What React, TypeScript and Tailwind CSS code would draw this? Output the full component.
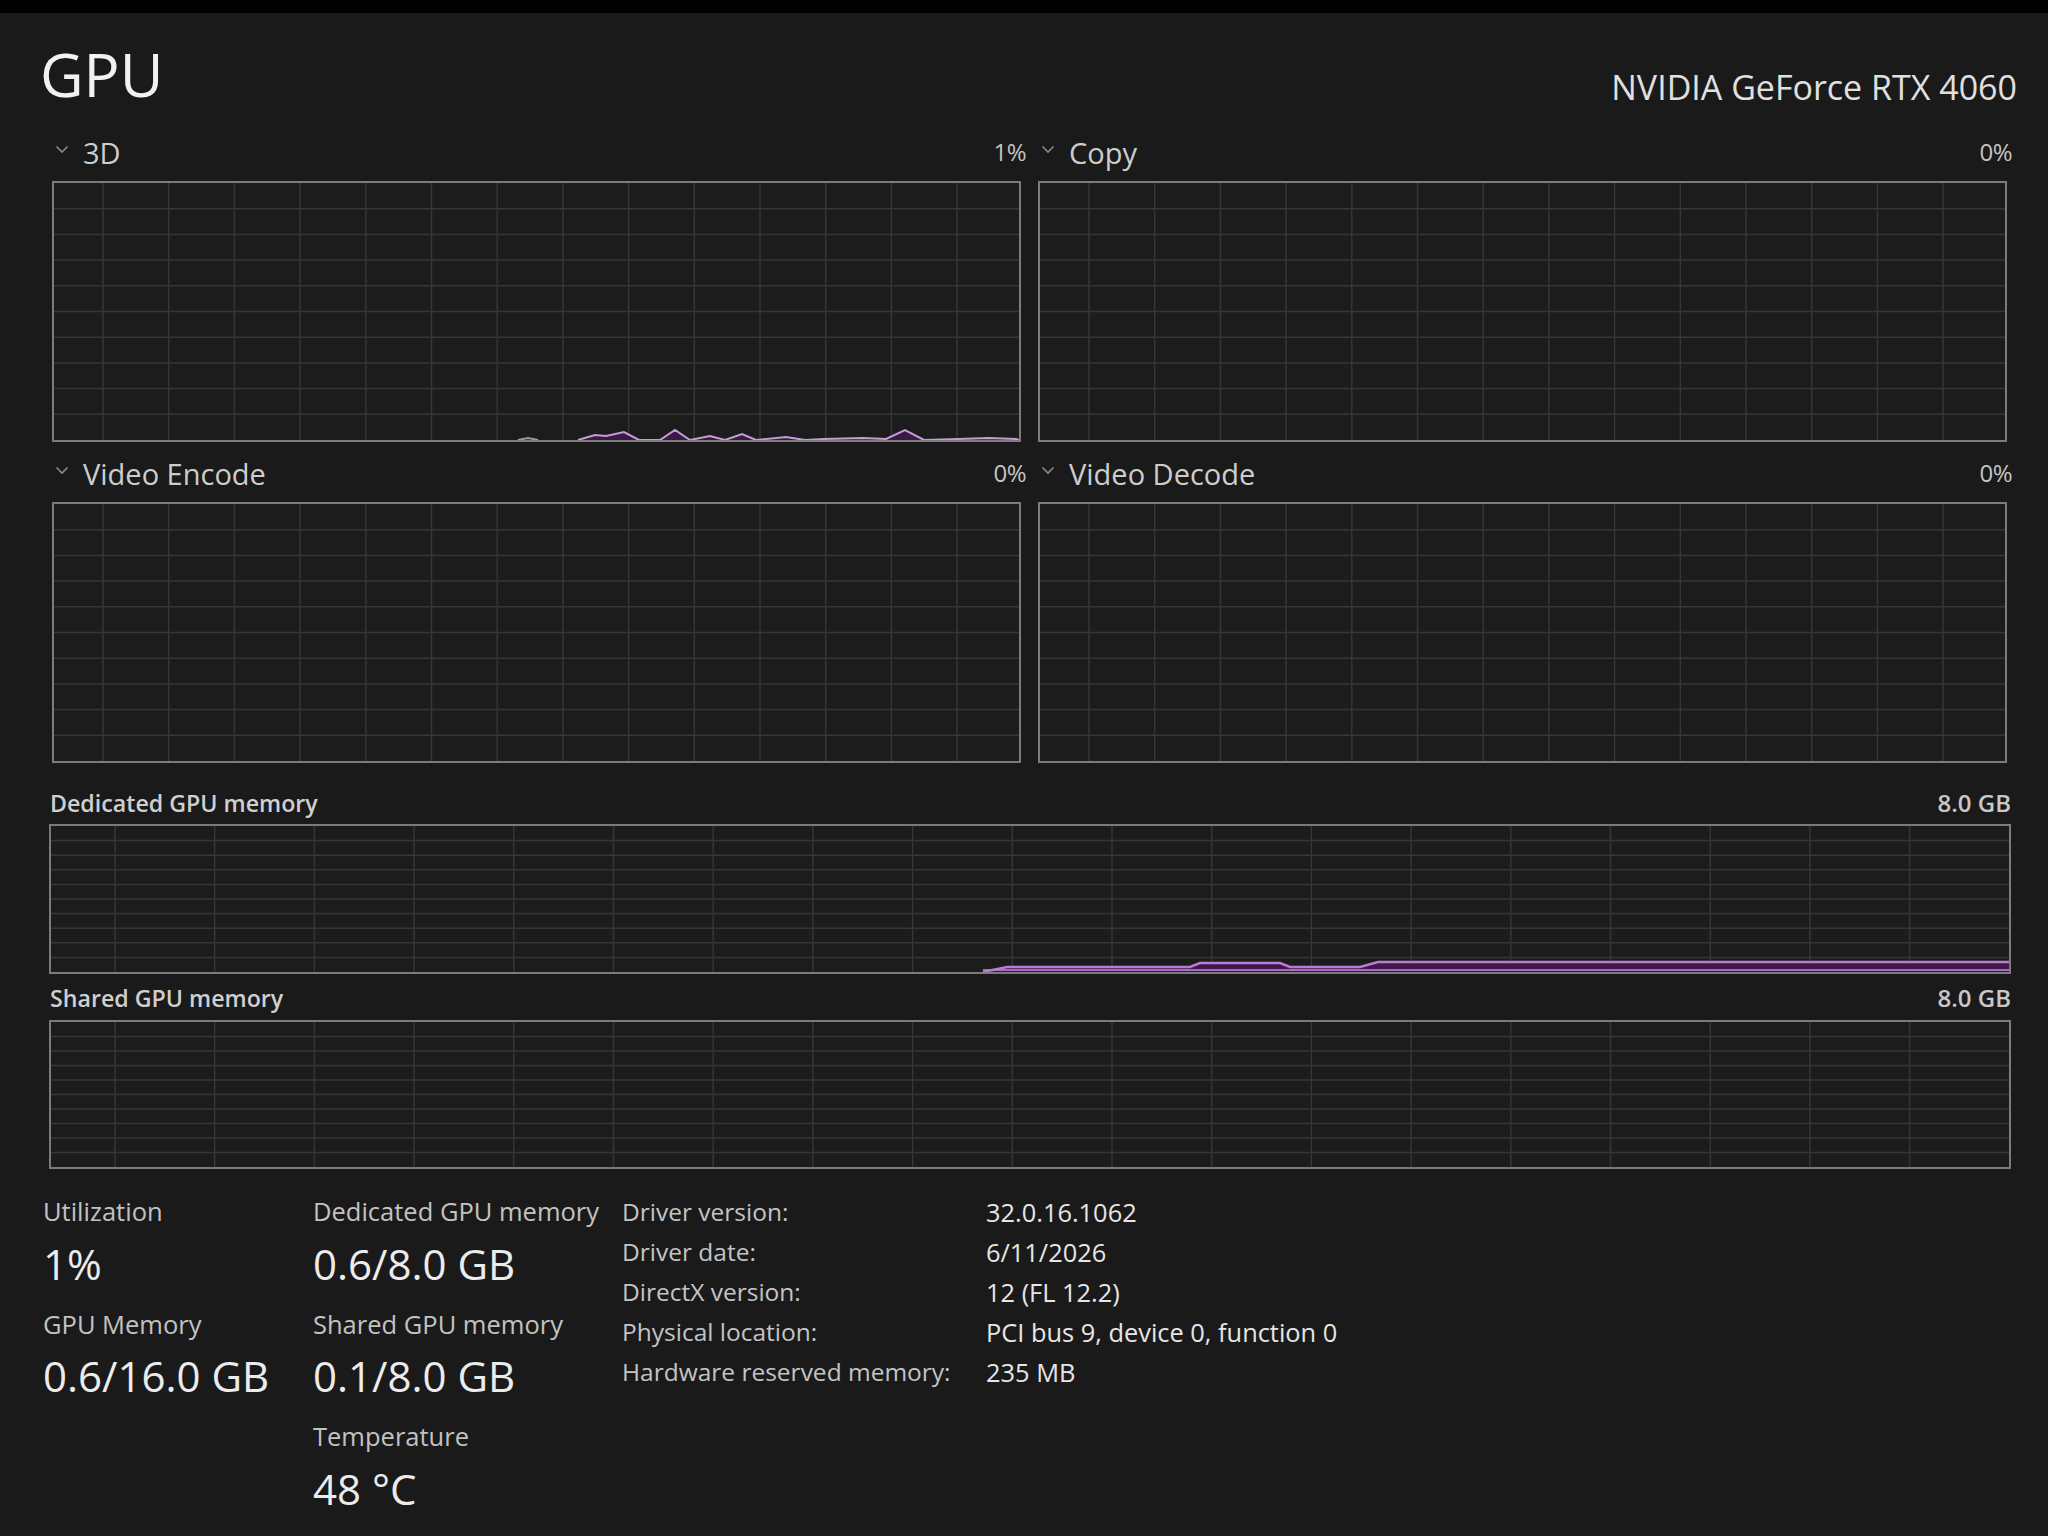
import type { ReactNode } from 'react';

// inner sizes of the graph boxes (outer minus the 2px border)
const SMALL_W = 965;
const SMALL_H = 257;
const MEM_W = 1958;
const MEM_H = 146;

function Chevron() {
    return (
        <svg width="14" height="9" viewBox="0 0 14 9" className="shrink-0 self-start mt-[7px]">
            <polyline points="1.5,1.5 7,7 12.5,1.5" fill="none" stroke="#8a8a8a" strokeWidth="1.6" />
        </svg>
    );
}

function Grid({ w, h, x0, dx, rows }: { w: number; h: number; x0: number; dx: number; rows: number }) {
    const lines: ReactNode[] = [];
    for (let x = x0; x < w - 4; x += dx) {
        lines.push(<line key={'v' + x} x1={x} y1={0} x2={x} y2={h} />);
    }
    for (let i = 1; i < rows; i++) {
        const y = (h / rows) * i;
        lines.push(<line key={'h' + i} x1={0} y1={y} x2={w} y2={y} />);
    }
    return (
        <g stroke="#363636" strokeWidth="1.5">
            {lines}
        </g>
    );
}

function Graph({ w, h, x0, dx, className, children }: { w: number; h: number; x0: number; dx: number; className?: string; children?: ReactNode }) {
    return (
        <div className={'border-2 border-[#7b7b7b] bg-[#1c1c1c] ' + (className ?? '')}>
            <svg width={w} height={h} viewBox={`0 0 ${w} ${h}`} className="block">
                <Grid w={w} h={h} x0={x0} dx={dx} rows={10} />
                {children}
            </svg>
        </div>
    );
}

function EngineGraph({ name, value, mt, children }: { name: string; value: string; mt: string; children?: ReactNode }) {
    return (
        <div className={'flex flex-col ' + mt}>
            <div className="flex items-end pl-[3px] mr-[-5px]">
                <Chevron />
                <span className="ml-[14px] text-[29px] leading-none text-[#cdcdcd]">{name}</span>
                <span className="ml-auto mb-[3px] text-[24px] leading-none text-[#c4c4c4] tracking-[-0.5px]">{value}</span>
            </div>
            <Graph w={SMALL_W} h={SMALL_H} x0={49} dx={65.7} className="mt-[14px]">
                {children}
            </Graph>
        </div>
    );
}

const spikes =
    'M524 257 L541 252 L552 253 L570 249 L585 257 L606 257 L621 247 L636 257 L656 253 L671 257 L688 251 L702 257 L732 254 L751 257 L770 256 L809 255 L832 256 L851 247 L870 257 L904 256 L935 255 L962 256 L965 257';

const memLine = 'M932 146 L956 141 L1139 141 L1149 137 L1229 137 L1239 141 L1309 141 L1327 136 L1958 136';

function Stat({ label, value, first }: { label: string; value: string; first?: boolean }) {
    return (
        <div className={first ? '' : 'mt-[27px]'}>
            <div className="text-[25.5px] leading-none text-[#c2c2c2]">{label}</div>
            <div className="mt-[18px] text-[42px] leading-none text-[#ececec]">{value}</div>
        </div>
    );
}

const details: [string, string][] = [
    ['Driver version:', '32.0.16.1062'],
    ['Driver date:', '6/11/2026'],
    ['DirectX version:', '12 (FL 12.2)'],
    ['Physical location:', 'PCI bus 9, device 0, function 0'],
    ['Hardware reserved memory:', '235 MB'],
];

export default function App() {
    return (
        <div className="w-[2048px] h-[1536px] overflow-hidden bg-[#1a1a1a] border-t-[13px] border-black font-['Open_Sans',sans-serif]">
            <div className="flex items-end justify-between pl-[40px] pr-[31px] pt-[31px]">
                <h1 className="text-[60px] leading-none text-[#f2f2f2]">GPU</h1>
                <div className="text-[34px] leading-none text-[#e0e0e0]">NVIDIA GeForce RTX 4060</div>
            </div>

            <div className="grid grid-cols-[969px_969px] gap-x-[17px] pl-[52px] mt-[34px]">
                <EngineGraph name="3D" value="1%" mt="">
                    <path d="M464 257 L474 255 L484 257" fill="none" stroke="#9a9a9a" strokeWidth="2" />
                    <path d={spikes + ' Z'} fill="#3a1a44" stroke="none" />
                    <path d={spikes} fill="none" stroke="#c79ad8" strokeWidth="2" />
                </EngineGraph>
                <EngineGraph name="Copy" value="0%" mt="" />
                <EngineGraph name="Video Encode" value="0%" mt="mt-[17px]" />
                <EngineGraph name="Video Decode" value="0%" mt="mt-[17px]" />
            </div>

            <div className="pl-[49px] pr-[37px] mt-[28px]">
                <div className="flex items-end justify-between pl-[1px]">
                    <span className="text-[23.2px] leading-none font-semibold text-[#cfcfcf]">Dedicated GPU memory</span>
                    <span className="text-[24px] leading-none font-semibold text-[#c8c8c8]">8.0 GB</span>
                </div>
                <Graph w={MEM_W} h={MEM_H} x0={64} dx={99.7} className="mt-[9px]">
                    <path d={memLine + ' L1958 146 Z'} fill="#3f1749" stroke="none" />
                    <line x1={932} y1={144} x2={1958} y2={144} stroke="#a66bc2" strokeWidth="2" />
                    <path d={memLine} fill="none" stroke="#b97dd3" strokeWidth="2.5" />
                </Graph>

                <div className="flex items-end justify-between pl-[1px] mt-[12px]">
                    <span className="text-[23.2px] leading-none font-semibold text-[#cfcfcf]">Shared GPU memory</span>
                    <span className="text-[24px] leading-none font-semibold text-[#c8c8c8]">8.0 GB</span>
                </div>
                <Graph w={MEM_W} h={MEM_H - 1} x0={64} dx={99.7} className="mt-[10px]" />
            </div>

            <div className="flex items-start mt-[24px] pl-[43px]">
                <div className="w-[270px] pt-[6px]">
                    <Stat label="Utilization" value="1%" first />
                    <Stat label="GPU Memory" value="0.6/16.0 GB" />
                </div>
                <div className="w-[309px] pt-[6px]">
                    <Stat label="Dedicated GPU memory" value="0.6/8.0 GB" first />
                    <Stat label="Shared GPU memory" value="0.1/8.0 GB" />
                    <Stat label="Temperature" value="48 °C" />
                </div>
                <div className="grid grid-cols-[364px_auto] content-start leading-[40px] -mt-[1px]">
                    {details.map(([k, v]) => (
                        <div key={k} className="contents">
                            <span className="text-[24.5px] text-[#c4c4c4]">{k}</span>
                            <span className="text-[25.4px] text-[#e6e6e6]">{v}</span>
                        </div>
                    ))}
                </div>
            </div>
        </div>
    );
}
